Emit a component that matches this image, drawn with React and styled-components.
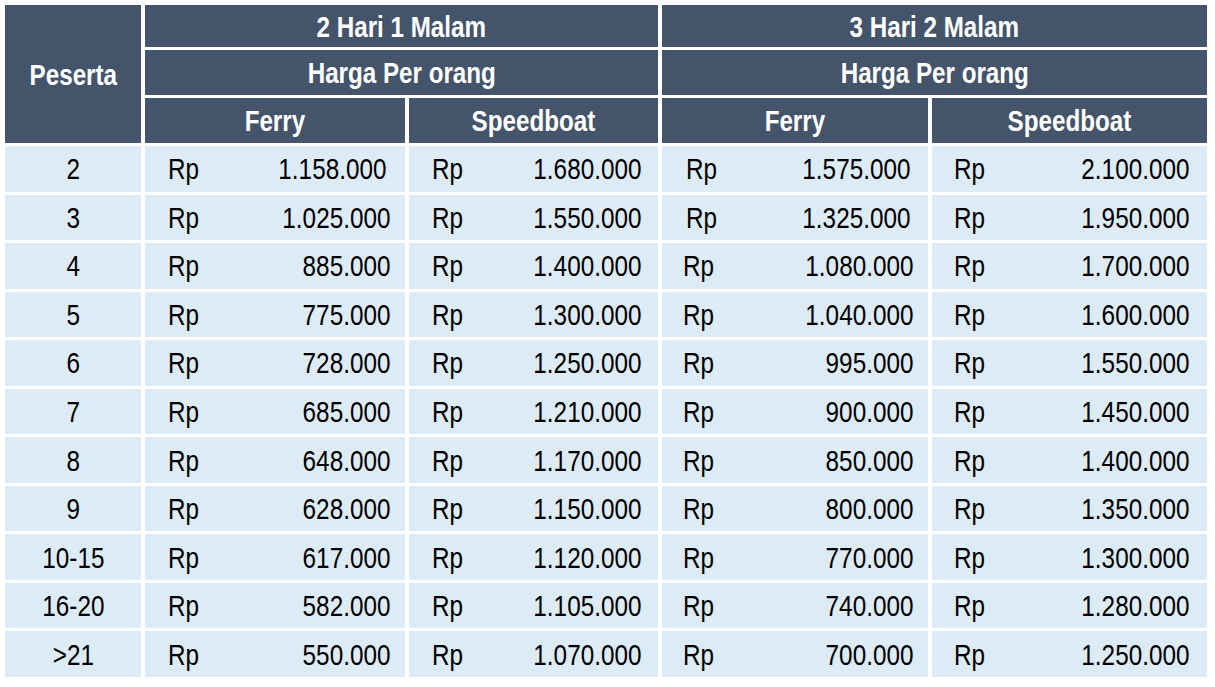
import React from "react";
import styled, { createGlobalStyle } from "styled-components";

const GlobalStyle = createGlobalStyle`
  html, body {
    margin: 0;
    padding: 0;
    background: #ffffff;
  }
  body {
    font-family: "Liberation Sans", Arial, sans-serif;
  }
`;

const Table = styled.table`
  border-collapse: separate;
  border-spacing: 4px 3px;
  table-layout: fixed;
  width: 1210px;
  margin: 2px 0 0 1px;
`;

const Col = styled.col`
  width: ${({ $w }) => $w}px;
`;

const HeadRow = styled.tr`
  height: ${({ $h }) => $h}px;
`;

const HeadCell = styled.th`
  background: #44546a;
  color: #ffffff;
  font-size: 29.5px;
  font-weight: bold;
  text-align: center;
  vertical-align: middle;
  padding: 1px 0 0;
  line-height: 1;
`;

const BodyRow = styled.tr`
  height: 45.55px;
`;

const Cell = styled.td`
  background: #ddebf7;
  color: #000000;
  font-size: 30px;
  padding: 1px 0 0;
  vertical-align: middle;
  line-height: 1;
  text-align: ${({ $center }) => ($center ? "center" : "left")};
`;

const Price = styled.div`
  display: flex;
  justify-content: space-between;
  align-items: center;
  padding: 0 ${({ $r }) => $r}px 0 ${({ $l }) => $l}px;
`;

// Arial Narrow look-alike: Liberation Sans squeezed horizontally
const Narrow = styled.span`
  display: inline-block;
  white-space: nowrap;
  transform: scaleX(${({ $sx }) => $sx || 0.81});
  transform-origin: ${({ $origin }) => $origin || "center"} center;
`;

const rows = [
  ["2", "1.158.000", "1.680.000", "1.575.000", "2.100.000"],
  ["3", "1.025.000", "1.550.000", "1.325.000", "1.950.000"],
  ["4", "885.000", "1.400.000", "1.080.000", "1.700.000"],
  ["5", "775.000", "1.300.000", "1.040.000", "1.600.000"],
  ["6", "728.000", "1.250.000", "995.000", "1.550.000"],
  ["7", "685.000", "1.210.000", "900.000", "1.450.000"],
  ["8", "648.000", "1.170.000", "850.000", "1.400.000"],
  ["9", "628.000", "1.150.000", "800.000", "1.350.000"],
  ["10-15", "617.000", "1.120.000", "770.000", "1.300.000"],
  ["16-20", "582.000", "1.105.000", "740.000", "1.280.000"],
  [">21", "550.000", "1.070.000", "700.000", "1.250.000"],
];

// inner padding per price column; a few cells sit slightly off in the original sheet
const pad = (row, col) => {
  if (col === 0) return row === 0 ? [23, 19] : [23, 15];
  if (col === 1) return [23, 17];
  if (col === 2) return row < 2 ? [24, 18] : [21, 15];
  return [22, 18];
};

const Head = ({ children, ...rest }) => (
  <HeadCell {...rest}>
    <Narrow $sx={0.82}>{children}</Narrow>
  </HeadCell>
);

export default function App() {
  return (
    <>
      <GlobalStyle />
      <Table>
        <colgroup>
          <Col $w={136} />
          <Col $w={260} />
          <Col $w={249} />
          <Col $w={266} />
          <Col $w={275} />
        </colgroup>
        <thead>
          <HeadRow $h={42}>
            <Head rowSpan={3}>Peserta</Head>
            <Head colSpan={2}>2 Hari 1 Malam</Head>
            <Head colSpan={2}>3 Hari 2 Malam</Head>
          </HeadRow>
          <HeadRow $h={44.5}>
            <Head colSpan={2}>Harga Per orang</Head>
            <Head colSpan={2}>Harga Per orang</Head>
          </HeadRow>
          <HeadRow $h={45.5}>
            <Head>Ferry</Head>
            <Head>Speedboat</Head>
            <Head>Ferry</Head>
            <Head>Speedboat</Head>
          </HeadRow>
        </thead>
        <tbody>
          {rows.map((r, i) => (
            <BodyRow key={r[0]}>
              <Cell $center>
                <Narrow>{r[0]}</Narrow>
              </Cell>
              {r.slice(1).map((v, j) => {
                const [l, rr] = pad(i, j);
                return (
                  <Cell key={j}>
                    <Price $l={l} $r={rr}>
                      <Narrow $origin="left">Rp</Narrow>
                      <Narrow $origin="right">{v}</Narrow>
                    </Price>
                  </Cell>
                );
              })}
            </BodyRow>
          ))}
        </tbody>
      </Table>
    </>
  );
}
